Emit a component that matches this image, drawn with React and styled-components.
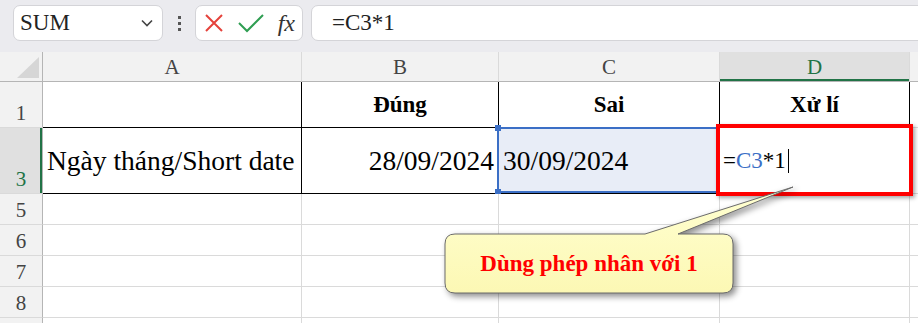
import React from 'react';
import styled, { createGlobalStyle } from 'styled-components';

const serif = "'Liberation Serif', 'DejaVu Serif', 'Times New Roman', serif";

const GlobalStyle = createGlobalStyle`
  body {
    margin: 0;
    background: #ffffff;
    font-family: ${serif};
    overflow: hidden;
  }
`;

const Page = styled.div`
  position: relative;
  width: 918px;
  height: 323px;
  overflow: hidden;
  background: #ffffff;
  font-family: ${serif};
`;

// ---- formula bar ----
const TopBar = styled.div`
  display: flex;
  align-items: flex-start;
  height: 52px;
  box-sizing: border-box;
  padding: 5px 0 0 13px;
  background: #ebebef;
`;

const Box = styled.div`
  display: flex;
  align-items: center;
  height: 36px;
  box-sizing: border-box;
  background: #ffffff;
  border: 1px solid #d4d4d8;
  border-radius: 7px;
`;

const NameBox = styled(Box)`
  width: 150px;
  justify-content: space-between;
  padding: 0 8px 0 6px;
  font-size: 23px;
  color: #222;
`;

const Dots = styled.div`
  width: 32px;
  height: 36px;
  display: flex;
  flex-direction: column;
  align-items: center;
  justify-content: center;
  gap: 3px;

  span {
    width: 3px;
    height: 3px;
    background: #555;
  }
`;

const ButtonGroup = styled(Box)`
  width: 108px;
  padding: 0 6px 0 8px;
  justify-content: space-between;
`;

const Fx = styled.span`
  font-family: ${serif};
  font-style: italic;
  font-size: 24px;
  color: #333;
  margin-right: 1px;
`;

const FormulaInput = styled(Box)`
  flex: 1;
  margin: 0 -12px 0 8px;
  padding-left: 20px;
  font-size: 23px;
  color: #222;
`;

// ---- sheet ----
const Sheet = styled.div`
  display: grid;
  grid-template-columns: 43px 259px 197px 221px 190px 1fr;
  grid-template-rows: 30px 46px 66px 31px 31px 31px 31px 31px 31px;
`;

const Corner = styled.div`
  position: relative;
  box-sizing: border-box;
  background: #f2f2f2;
  border-right: 1px solid #b5b5b5;
  border-bottom: 1px solid #b5b5b5;

  &::after {
    content: '';
    position: absolute;
    right: 3px;
    bottom: 3px;
    width: 22px;
    height: 21px;
    background: #d6d6d6;
    clip-path: polygon(100% 0, 100% 100%, 0 100%);
  }
`;

const ColHeader = styled.div`
  display: flex;
  align-items: center;
  justify-content: center;
  box-sizing: border-box;
  background: ${(p) => (p.$active ? '#e0e0e0' : '#f2f2f2')};
  color: ${(p) => (p.$active ? '#217346' : '#444')};
  border-right: 1px solid #dadada;
  border-bottom: 1px solid #b5b5b5;
  box-shadow: ${(p) => (p.$active ? 'inset 0 -2px 0 #217346' : 'none')};
  font-size: 21px;
  padding-top: 2px;
`;

const RowHeader = styled.div`
  display: flex;
  align-items: flex-end;
  justify-content: center;
  box-sizing: border-box;
  padding-bottom: 3px;
  background: ${(p) => (p.$active ? '#e0e0e0' : '#f2f2f2')};
  color: ${(p) => (p.$active ? '#217346' : '#444')};
  border-right: 1px solid #b5b5b5;
  border-bottom: 1px solid #dadada;
  box-shadow: ${(p) => (p.$active ? 'inset -2px 0 0 #217346' : 'none')};
  font-size: 21px;
  line-height: 1;
`;

const Cell = styled.div`
  position: relative;
  display: flex;
  align-items: center;
  justify-content: ${(p) => p.$align || 'flex-start'};
  box-sizing: border-box;
  padding: 0 4px;
  white-space: nowrap;
  background: ${(p) => (p.$selected ? '#e8edf7' : '#ffffff')};
  border-right: 1px solid ${(p) => (p.$table ? '#000' : '#dadada')};
  border-bottom: 1px solid ${(p) => (p.$table ? '#000' : '#dadada')};
  font-size: ${(p) => (p.$bold ? '23px' : '27.5px')};
  font-weight: ${(p) => (p.$bold ? 700 : 400)};
  color: #000;
`;

const EditText = styled.span`
  font-size: 23px;
  margin-left: -1px;
  display: flex;
  align-items: center;
`;

const Ref = styled.span`
  color: #3b6fc6;
`;

const Caret = styled.span`
  display: inline-block;
  width: 1px;
  height: 24px;
  margin-left: 2px;
  background: #000;
`;

const Selection = styled.div`
  position: absolute;
  top: -1px;
  left: -2px;
  right: 0;
  bottom: 0;
  border: 2px solid #3b6fc6;
  pointer-events: none;
`;

const Handle = styled.div`
  position: absolute;
  left: -4px;
  ${(p) => (p.$bottom ? 'bottom: -4px;' : 'top: -4px;')}
  width: 6px;
  height: 6px;
  background: #3b6fc6;
`;

// ---- overlays ----
const RedFrame = styled.div`
  position: absolute;
  left: 716px;
  top: 124px;
  width: 197px;
  height: 72px;
  box-sizing: border-box;
  border: 4px solid #ff0000;
  box-shadow: 2px 2px 4px rgba(0, 0, 0, 0.35);
`;

const Callout = styled.div`
  position: absolute;
  left: 440px;
  top: 183px;
  width: 360px;
  height: 120px;
`;

const CalloutShape = styled.svg`
  position: absolute;
  inset: 0;
  overflow: visible;
  filter: drop-shadow(3px 3px 3px rgba(0, 0, 0, 0.45));
`;

const CalloutText = styled.div`
  position: absolute;
  left: 5px;
  top: 51px;
  width: 288px;
  height: 59px;
  display: flex;
  align-items: center;
  justify-content: center;
  font-family: ${serif};
  font-size: 23px;
  font-weight: 700;
  color: #ff0000;
`;

const columns = [
  { key: 'A' },
  { key: 'B' },
  { key: 'C' },
  { key: 'D', active: true },
  { key: '' },
];

const tableRows = [
  {
    n: '1',
    cells: [
      { text: '' },
      { text: 'Đúng', bold: true, align: 'center' },
      { text: 'Sai', bold: true, align: 'center' },
      { text: 'Xử lí', bold: true, align: 'center' },
    ],
  },
  {
    n: '3',
    active: true,
    cells: [
      { text: 'Ngày tháng/Short date' },
      { text: '28/09/2024', align: 'flex-end' },
      { text: '30/09/2024', selected: true },
      { edit: true },
    ],
  },
];

// row 9 sits below the window edge, its number is not visible
const emptyRows = ['5', '6', '7', '8', ''];

const Chevron = () => (
  <svg width="14" height="10" viewBox="0 0 14 10">
    <path d="M2 2.5 L7 7.5 L12 2.5" fill="none" stroke="#444" strokeWidth="1.6" />
  </svg>
);

const Cancel = () => (
  <svg width="20" height="20" viewBox="0 0 20 20">
    <path d="M2 2 L18 18 M18 2 L2 18" stroke="#e5423b" strokeWidth="2" fill="none" />
  </svg>
);

const Enter = () => (
  <svg width="26" height="20" viewBox="0 0 26 20">
    <path d="M1 10 L9 18 L25 2" stroke="#2f9e52" strokeWidth="2" fill="none" />
  </svg>
);

const App = () => (
  <Page>
    <GlobalStyle />
    <TopBar>
      <NameBox>
        SUM
        <Chevron />
      </NameBox>
      <Dots>
        <span />
        <span />
        <span />
      </Dots>
      <ButtonGroup>
        <Cancel />
        <Enter />
        <Fx>fx</Fx>
      </ButtonGroup>
      <FormulaInput>=C3*1</FormulaInput>
    </TopBar>

    <Sheet>
      <Corner />
      {columns.map((c, i) => (
        <ColHeader key={i} $active={c.active}>
          {c.key}
        </ColHeader>
      ))}

      {tableRows.map((row) => (
        <React.Fragment key={row.n}>
          <RowHeader $active={row.active}>{row.n}</RowHeader>
          {row.cells.map((cell, i) => (
            <Cell
              key={i}
              $table
              $bold={cell.bold}
              $align={cell.align}
              $selected={cell.selected}
            >
              {cell.edit ? (
                <EditText>
                  =<Ref>C3</Ref>*1
                  <Caret />
                </EditText>
              ) : (
                cell.text
              )}
              {cell.selected && (
                <Selection>
                  <Handle />
                  <Handle $bottom />
                </Selection>
              )}
            </Cell>
          ))}
          <Cell />
        </React.Fragment>
      ))}

      {emptyRows.map((n, r) => (
        <React.Fragment key={r}>
          <RowHeader>{n}</RowHeader>
          {columns.map((c, i) => (
            <Cell key={i} />
          ))}
        </React.Fragment>
      ))}
    </Sheet>

    <RedFrame />

    <Callout>
      <CalloutShape width="360" height="120" viewBox="0 0 360 120">
        <defs>
          <linearGradient id="noteFill" x1="0" y1="0" x2="0" y2="1">
            <stop offset="0" stopColor="#ffffd2" />
            <stop offset="1" stopColor="#fcf8b4" />
          </linearGradient>
        </defs>
        <path
          d="M15 51 L205 51 L353 4 L238 51 L283 51 Q293 51 293 61 L293 100 Q293 110 283 110 L15 110 Q5 110 5 100 L5 61 Q5 51 15 51 Z"
          fill="url(#noteFill)"
          stroke="#6b6b6b"
          strokeWidth="1"
        />
      </CalloutShape>
      <CalloutText>Dùng phép nhân với 1</CalloutText>
    </Callout>
  </Page>
);

export default App;
